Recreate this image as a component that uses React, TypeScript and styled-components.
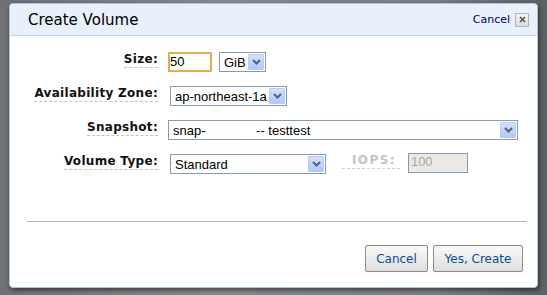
import React from 'react'
import styled, { createGlobalStyle } from 'styled-components'

const GlobalStyle = createGlobalStyle`
    html, body {
        margin: 0;
        padding: 0;
    }
    body {
        width: 547px;
        height: 295px;
        overflow: hidden;
        background: linear-gradient(to right, #6f7174 0%, #8a8c8e 40%, #7d8083 80%, #5e6164 100%);
        font-family: 'DejaVu Sans', Verdana, sans-serif;
    }
`

const Screen = styled.div`
    padding: 3px 0 0 9px;
`

const Dialog = styled.div`
    width: 527px;
    height: 283px;
    background: #ffffff;
    border: 1px solid #a9c6e6;
    border-radius: 4px;
    box-shadow: 1px 2px 5px rgba(0, 0, 0, 0.55);
    display: flex;
    flex-direction: column;
    overflow: hidden;
`

const Header = styled.div`
    height: 31px;
    background: #e8f0fb;
    border-bottom: 1px solid #c2d7ee;
    display: flex;
    align-items: center;
    padding: 0 8px 0 18px;
`

const Title = styled.h2`
    flex: 1;
    margin: 0;
    font-size: 15px;
    font-weight: normal;
    color: #000;
`

const HeaderCancel = styled.a`
    font-size: 11px;
    color: #000066;
    margin-right: 5px;
    cursor: pointer;
`

const CloseBox = styled.span`
    width: 12px;
    height: 12px;
    border: 1px solid #b5b5b5;
    background: linear-gradient(#f4f4f4, #dcdcdc);
    display: flex;
    align-items: center;
    justify-content: center;
`

const Form = styled.div`
    padding-top: 16px;
    display: grid;
    grid-template-columns: 148px 1fr;
    grid-auto-rows: 20px;
    row-gap: 14px;
    column-gap: 10px;
`

const Label = styled.span<{ $muted?: boolean }>`
    justify-self: end;
    align-self: center;
    font-size: 12px;
    font-weight: bold;
    color: ${p => (p.$muted ? '#c4c4c4' : '#111')};
    border-bottom: 1px dashed ${p => (p.$muted ? '#cfcfcf' : '#c0c0c0')};
    padding-bottom: 1px;
    margin-top: -5px;
    white-space: nowrap;
    letter-spacing: 0.3px;
`

const MutedLabel = styled(Label)`
    padding: 0 4px 1px 10px;
    margin-left: 9px;
    margin-right: 1px;
    margin-top: -7px;
    letter-spacing: 1.4px;
`

const Controls = styled.div<{ $indent?: number }>`
    display: flex;
    align-items: center;
    gap: 7px;
    padding-left: ${p => p.$indent || 0}px;
`

const TextInput = styled.div<{ $w: number; $disabled?: boolean; $focus?: boolean }>`
    box-sizing: border-box;
    width: ${p => p.$w}px;
    height: 20px;
    border: ${p => (p.$focus ? '2px solid #e0b050' : '1px solid #7f9db9')};
    background: ${p => (p.$disabled ? '#ebe9e3' : '#fff')};
    color: ${p => (p.$disabled ? '#a8a8a8' : '#000')};
    font-family: 'Liberation Sans', Arial, sans-serif;
    font-size: 13px;
    line-height: 16px;
    padding-left: ${p => (p.$focus ? 0 : 2)}px;
    margin-top: ${p => (p.$disabled ? -3 : 0)}px;
`

const SelectBox = styled.div<{ $w: number }>`
    box-sizing: border-box;
    width: ${p => p.$w}px;
    height: 20px;
    border: 1px solid #7f9db9;
    background: #fff;
    display: flex;
    align-items: center;
    padding: 0 1px 0 4px;
    font-family: 'Liberation Sans', Arial, sans-serif;
    font-size: 13px;
    color: #000;
    white-space: pre;
`

const SelectText = styled.span`
    flex: 1;
    overflow: hidden;
`

const Arrow = styled.span`
    width: 16px;
    height: 16px;
    box-sizing: border-box;
    border: 1px solid #b9cbf3;
    border-radius: 1px;
    background: linear-gradient(#d4e0fc, #b2c6f6);
    display: flex;
    align-items: center;
    justify-content: center;
`

const Separator = styled.div`
    margin: 47px 10px 0 17px;
    border-top: 1px solid #b6b6b6;
`

const Footer = styled.div`
    display: flex;
    justify-content: flex-end;
    gap: 5px;
    padding: 23px 14px 0 0;
`

const Button = styled.button<{ $w: number }>`
    width: ${p => p.$w}px;
    height: 27px;
    border: 1px solid #8a8a8a;
    border-radius: 2px;
    background: linear-gradient(#fafafa, #dedede);
    color: #0b4d8f;
    font-family: 'DejaVu Sans', Verdana, sans-serif;
    font-size: 12px;
    padding: 0;
`

const Chevron = () => (
    <svg width="9" height="6" viewBox="0 0 9 6">
        <path d="M1 1 L4.5 4.5 L8 1" fill="none" stroke="#4d6185" strokeWidth="2" />
    </svg>
)

const Select = ({ w, value }: { w: number; value: string }) => (
    <SelectBox $w={w}>
        <SelectText>{value}</SelectText>
        <Arrow>
            <Chevron />
        </Arrow>
    </SelectBox>
)

const App = () => (
    <Screen>
        <GlobalStyle />
        <Dialog>
            <Header>
                <Title>Create Volume</Title>
                <HeaderCancel>Cancel</HeaderCancel>
                <CloseBox>
                    <svg width="7" height="7" viewBox="0 0 7 7">
                        <path d="M1 1 L6 6 M6 1 L1 6" stroke="#555" strokeWidth="1.6" />
                    </svg>
                </CloseBox>
            </Header>
            <Form>
                <Label>Size:</Label>
                <Controls>
                    <TextInput $w={44} $focus>50</TextInput>
                    <Select w={47} value="GiB" />
                </Controls>

                <Label>Availability Zone:</Label>
                <Controls $indent={2}>
                    <Select w={117} value="ap-northeast-1a" />
                </Controls>

                <Label>Snapshot:</Label>
                <Controls>
                    <Select w={350} value={'snap-              -- testtest'} />
                </Controls>

                <Label>Volume Type:</Label>
                <Controls $indent={2}>
                    <Select w={156} value="Standard" />
                    <MutedLabel $muted>IOPS:</MutedLabel>
                    <TextInput $w={60} $disabled>
                        100
                    </TextInput>
                </Controls>
            </Form>
            <Separator />
            <Footer>
                <Button $w={63}>Cancel</Button>
                <Button $w={90}>Yes, Create</Button>
            </Footer>
        </Dialog>
    </Screen>
)

export default App
